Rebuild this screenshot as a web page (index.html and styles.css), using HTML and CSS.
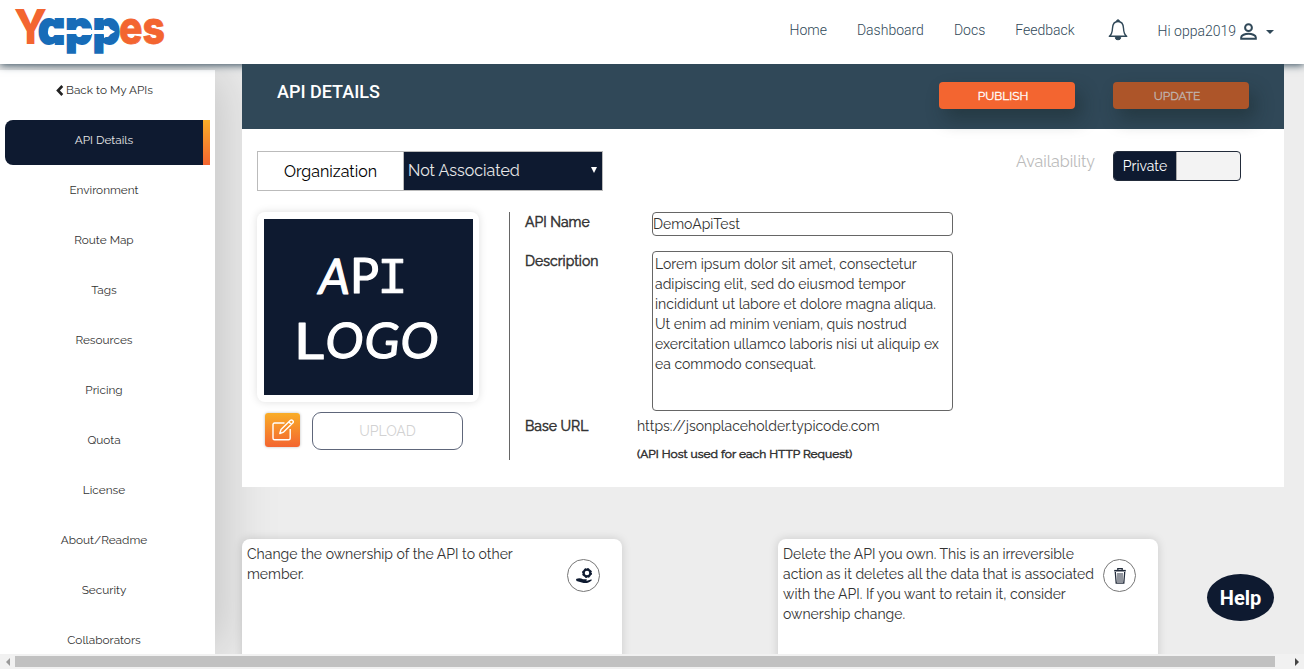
FILE: index.html
```html
<!DOCTYPE html>
<html lang="en">
<head>
<meta charset="utf-8">
<title>Yappes - API Details</title>
<link rel="stylesheet" href="styles.css">
</head>
<body>
<header class="topbar">
  <svg class="brand" width="180" height="64" viewBox="0 0 180 64">
    <g class="brand-text">
      <text x="14" y="44" font-size="48" textLength="33" lengthAdjust="spacingAndGlyphs" fill="#f36530">Y</text>
      <text class="brand-app" x="38" y="43.500" font-size="45" textLength="82" lengthAdjust="spacingAndGlyphs" fill="#176cb8" stroke="#176cb8">app</text>
      <text x="119" y="43.500" font-size="46" textLength="46" lengthAdjust="spacingAndGlyphs" fill="#f36530" stroke="#f36530" stroke-width=".8">es</text>
    </g>
    <path d="M50 28.500h15v1.500h14v-1.500h12v1.500h13v-4.500l11 6.300-11 6.300v-4h-13v1h-12v-1h-14v1h-15a2.600 2.600 0 0 1 0-5.100z" fill="#fff"/>
  </svg>
  <nav class="nav">
    <a class="n-home">Home</a><a class="n-dash">Dashboard</a><a class="n-docs">Docs</a><a class="n-feed">Feedback</a>
    <svg class="bell" width="20" height="22" viewBox="0 0 20 22" fill="none" stroke="#304858" stroke-width="1.400">
      <path d="M1.300 17.300c2.300-1.500 3-3.500 3.200-8C4.700 5 6.300 2.500 10 2.500S15.300 5 15.500 9.300c.2 4.500.9 6.500 3.200 8z" stroke-linejoin="round"/>
      <path d="M8.500 2.300a1.500 1.500 0 0 1 3 0M7.300 18.500a2.700 2.300 0 0 0 5.400 0z" fill="#304858" stroke-width="1"/>
    </svg>
    <span class="user">Hi oppa2019</span>
    <svg class="person" width="17" height="17" viewBox="0 0 17 17" fill="none" stroke="#304858" stroke-width="2">
      <circle cx="8.500" cy="4.700" r="3.400"/><path d="M1.200 15.700v-1.500c0-2 4-3.400 7.300-3.400s7.300 1.400 7.300 3.400v1.500z"/>
    </svg>
    <span class="caret"></span>
  </nav>
</header>
<div class="body">
  <aside class="sidebar">
    <a class="item back"><svg width="8" height="11" viewBox="0 0 8 11"><path d="M6.300 1L2 5.500 6.300 10" fill="none" stroke="#222" stroke-width="2.600"/></svg><span>Back to My APIs</span></a>
    <a class="item active"><span>API Details</span></a>
    <a class="item"><span>Environment</span></a>
    <a class="item"><span>Route Map</span></a>
    <a class="item"><span>Tags</span></a>
    <a class="item"><span>Resources</span></a>
    <a class="item"><span>Pricing</span></a>
    <a class="item"><span>Quota</span></a>
    <a class="item"><span>License</span></a>
    <a class="item"><span>About/Readme</span></a>
    <a class="item"><span>Security</span></a>
    <a class="item"><span>Collaborators</span></a>
  </aside>
  <main class="main">
    <section class="panel">
      <div class="banner">
        <h1>API DETAILS</h1>
        <button class="btn">PUBLISH</button>
        <button class="btn dim">UPDATE</button>
      </div>
      <div class="toolbar">
        <div class="org"><span class="org-label">Organization</span><span class="org-select"><span>Not Associated</span><i></i></span></div>
        <span class="avail">Availability</span>
        <div class="toggle"><span>Private</span></div>
      </div>
      <div class="content">
        <div class="logo-col">
          <div class="logo-card">
            <svg width="209" height="176" viewBox="0 0 209 176">
              <rect width="209" height="176" fill="#0e1a30"/>
              <g class="logo-text">
                <text transform="translate(53 75) skewX(-7)" font-size="49" textLength="31" lengthAdjust="spacingAndGlyphs">A</text>
                <text x="86" y="74" font-size="49" textLength="29" lengthAdjust="spacingAndGlyphs">P</text>
                <text class="mono" x="113" y="74" font-size="47" textLength="31" lengthAdjust="spacingAndGlyphs">I</text>
                <text x="30" y="140" font-size="50" textLength="30" lengthAdjust="spacingAndGlyphs">L</text>
                <text transform="translate(60 139) skewX(-6)" font-size="49" textLength="38" lengthAdjust="spacingAndGlyphs">O</text>
                <text transform="translate(99 139) skewX(-6)" font-size="49" textLength="35" lengthAdjust="spacingAndGlyphs">G</text>
                <text transform="translate(135 139) skewX(-6)" font-size="49" textLength="38" lengthAdjust="spacingAndGlyphs">O</text>
              </g>
            </svg>
          </div>
          <div class="upload-row">
            <span class="edit"><svg width="22" height="22" viewBox="0 0 22 22" fill="none" stroke="#fff" stroke-width="1.400" stroke-linejoin="round"><path d="M12.500 4H2.500A1.500 1.500 0 0 0 1 5.500v13.700a1.500 1.500 0 0 0 1.500 1.500h14.200a1.500 1.500 0 0 0 1.500-1.500V10"/><path d="M7.800 14.500l1.200-4 9.200-8.900a1.700 1.700 0 0 1 2.500 2.500l-9.100 9zM17 3l2.400 2.400"/></svg></span>
            <button class="upload">UPLOAD</button>
          </div>
        </div>
        <div class="form">
          <div class="row r-name"><label>API Name</label><input class="field" value="DemoApiTest"></div>
          <div class="row r-desc"><label>Description</label><textarea class="field area">Lorem ipsum dolor sit amet, consectetur
adipiscing elit, sed do eiusmod tempor
incididunt ut labore et dolore magna aliqua.
Ut enim ad minim veniam, quis nostrud
exercitation ullamco laboris nisi ut aliquip ex
ea commodo consequat.</textarea></div>
          <div class="row r-url"><label>Base URL</label><div class="url"><span>https://jsonplaceholder.typicode.com</span><small>(API Host used for each HTTP Request)</small></div></div>
        </div>
      </div>
    </section>
    <section class="cards">
      <article class="card"><p>Change the ownership of the API to other<br>member.</p>
        <span class="round"><svg width="18" height="18" viewBox="0 0 18 18"><circle cx="12" cy="6" r="3.400" fill="none" stroke="#0e1a30" stroke-width="2.300"/><circle cx="12" cy="6" r="4.500" fill="none" stroke="#0e1a30" stroke-width="1" stroke-dasharray="2 1.500"/><path d="M1 12c3-1.500 5-.8 7 .2h3.500c.9.8 0 1.600-1.500 1.500H7.500h4.500L16 12.600c1 0 1 .7.3 1.200-3 2.600-6.300 2.700-9.500 1.600L1.500 14z" fill="#0e1a30"/></svg></span>
      </article>
      <article class="card"><p>Delete the API you own. This is an irreversible<br>action as it deletes all the data that is associated<br>with the API. If you want to retain it, consider<br>ownership change.</p>
        <span class="round"><svg width="14" height="18" viewBox="0 0 14 18" fill="none" stroke="#222b3a"><path d="M1.200 3.700h11.600" stroke-width="1.600"/><path d="M4.800 3V1.700h4.400V3M2.300 5l.9 11.100h7.600L11.700 5" stroke-width="1.300"/><path d="M5 6v9M7 6v9M9 6v9" stroke-width="1"/></svg></span>
      </article>
    </section>
  </main>
</div>
<div class="scrollbar"><i class="arrow left"></i><div class="thumb"></div><i class="arrow right"></i></div>
<div class="help">Help</div>
</body>
</html>
```
FILE: styles.css
```css
* { box-sizing: border-box; }
body {
  margin: 0; width: 1304px; height: 669px; overflow: hidden;
  display: flex; flex-direction: column; position: relative;
  background: #ededed; color: #333;
  font-family: Raleway, Lato, sans-serif; font-size: 14px;
}
button, input, textarea { font: inherit; color: inherit; }
.topbar {
  height: 64px; flex: none; display: flex; align-items: flex-start; justify-content: space-between;
  position: relative; background: #fff; box-shadow: 0 1px 8px #304858;
}
.brand { display: block; }
.brand-text { font-family: Inter, Lato, sans-serif; font-weight: 800; }
.brand-app { font-feature-settings: "cv11"; stroke-width: 2px; }
.nav {
  display: flex; align-items: center; height: 60px; padding-right: 30px;
  font-family: Roboto, sans-serif; font-weight: 300; font-size: 14px; color: #304858;
}
.nav a { margin-right: 30px; }
.nav .n-feed { margin-right: 33px; }
.bell { margin-right: 30px; }
.user { padding-top: 2px; }
.person { margin: 3px 9px 0 4px; }
.caret { margin-top: 4px; border: 4px solid transparent; border-top-color: #304858; border-bottom: 0; }
.body { flex: none; height: 590px; display: flex; overflow: hidden; }
.sidebar {
  width: 215px; margin-top: 6px; flex: none; background: #fff;
  box-shadow: 12px 0 50px rgba(0,0,0,.16);
  font-size: 11.8px;
}
.item { display: flex; justify-content: center; align-items: center; height: 45px; margin: 0 5px 5px; padding: 0 7px 6px 0; }
.item.back { height: 40px; margin-bottom: 10px; gap: 2px; padding: 0 6px 0 0; }
.item.active {
  color: #e8e8e8; border-radius: 8px 0 0 8px;
  background: linear-gradient(#f9ad28, #f36530) right / 7px 100% no-repeat, #0e1a30;
}
.main { margin-left: 27px; width: 1042px; flex: none; position: relative; }
.panel { height: 423px; background: #fff; }
.banner { height: 65px; background: #304858; display: flex; align-items: flex-start; padding: 18px 35px 0; }
.banner h1 { margin: -2px auto 0 0; font: 500 18px/24px Roboto, sans-serif; color: #fff; }
.btn {
  width: 136px; height: 27px; padding: 0 8px 0 0; border: 0; border-radius: 4px; background: #f36530; color: #fff;
  font-size: 12px; -webkit-text-stroke: .3px; box-shadow: 6px 10px 18px rgba(20,35,35,.4); margin-left: 38px;
}
.btn.dim { background: #ad5529; color: #c0b4ae; }
.toolbar { display: flex; height: 83px; padding: 22px 43px 0 15px; align-items: flex-start; }
.org { display: flex; width: 346px; height: 40px; border: 1px solid #bbb; margin-right: auto; font-size: 16px; }
.org-label { width: 145px; display: flex; align-items: center; justify-content: center; color: #000; }
.org-select { flex: 1; border-left: 1px solid #bbb; background: #0e1a30; color: #e8e8e8; display: flex; align-items: center; justify-content: space-between; padding: 0 5px 2px 4px; }
.org-select i { border: 3px solid transparent; border-top: 6px solid #fff; border-bottom: 0; }
.avail { color: #bbb; font-size: 16px; margin: 1px 18px 0 0; line-height: 20px; }
.toggle { width: 128px; height: 30px; border: 1px solid #222b3a; border-radius: 4px; background: #f3f3f3; overflow: hidden; display: flex; }
.toggle span { width: 63px; background: #0e1a30; color: #fff; display: flex; align-items: center; justify-content: center; border-right: 1px solid #aaa; }
.content { display: flex; padding-left: 15px; }
.logo-col { width: 252px; height: 249px; }
.logo-card { width: 222px; height: 190px; padding: 7px; border-radius: 8px; box-shadow: 0 0 8px rgba(0,0,0,.13); }
.logo-card svg { display: block; }
.logo-text { font-family: "Comic Sans MS", Lato, sans-serif; font-weight: 400; fill: #fff; stroke: #fff; stroke-width: 1.2px; stroke-linejoin: round; }
.logo-text .mono { font-family: "DejaVu Sans Mono", monospace; stroke-width: .6px; }
.upload-row { display: flex; margin: 10px 0 0 8px; }
.edit { width: 35px; height: 34px; margin: 1px 12px 0 0; border-radius: 3px; background: linear-gradient(#f9ad28, #f36530); box-shadow: 0 0 3px #bbb; display: flex; align-items: center; justify-content: center; }
.upload { width: 151px; height: 38px; border: 1px solid #5e667a; border-radius: 9px; background: #fff; color: #d2d2d2; }
.form { height: 248px; width: 460px; border-left: 1px solid #666; padding-left: 15px; }
.row { display: flex; }
.row label { width: 127px; flex: none; line-height: 20px; -webkit-text-stroke: .5px; }
.field { width: 301px; height: 24px; padding: 0; border: 1px solid #666; border-radius: 4px; background: #fff; outline: 0; }
.r-name { height: 39px; }
.r-desc { height: 165px; }
.area { height: 160px; padding: 2px; resize: none; overflow: hidden; line-height: 20px; white-space: pre; }
.r-url label { width: 112px; }
.url { line-height: 20px; }
.url span, .url small { display: block; white-space: nowrap; }
.url small { margin-top: 8px; font-size: 12px; -webkit-text-stroke: .5px; }
.cards { display: flex; gap: 156px; margin-top: 52px; }
.card { width: 380px; height: 140px; border-radius: 8px; background: #fff; padding: 5px 22px 0 5px; display: flex; justify-content: space-between; box-shadow: 0 0 10px rgba(0,0,0,.15); }
.card p { margin: 0; line-height: 20px; white-space: nowrap; }
.round { width: 33px; height: 33px; margin-top: 15px; border: 1px solid #777; border-radius: 50%; display: flex; align-items: center; justify-content: center; flex: none; }
.scrollbar { height: 15px; flex: none; background: #f1f1f1; display: flex; align-items: center; }
.thumb { width: 1260px; height: 11px; background: #c1c1c1; }
.arrow { width: 15px; display: flex; justify-content: center; }
.arrow::before { content: ""; border: 4px solid transparent; }
.arrow.left::before { border-right: 4px solid #999; border-left: 0; }
.arrow.right { width: 29px; padding-left: 14px; }
.arrow.right::before { border-left: 4px solid #444; border-right: 0; }
.help {
  position: absolute; left: 1207px; top: 574px; width: 67px; height: 47px; border-radius: 50%;
  background: #0e1a30; color: #fff; font: 700 20px/48px Roboto, sans-serif; text-align: center;
}
```
